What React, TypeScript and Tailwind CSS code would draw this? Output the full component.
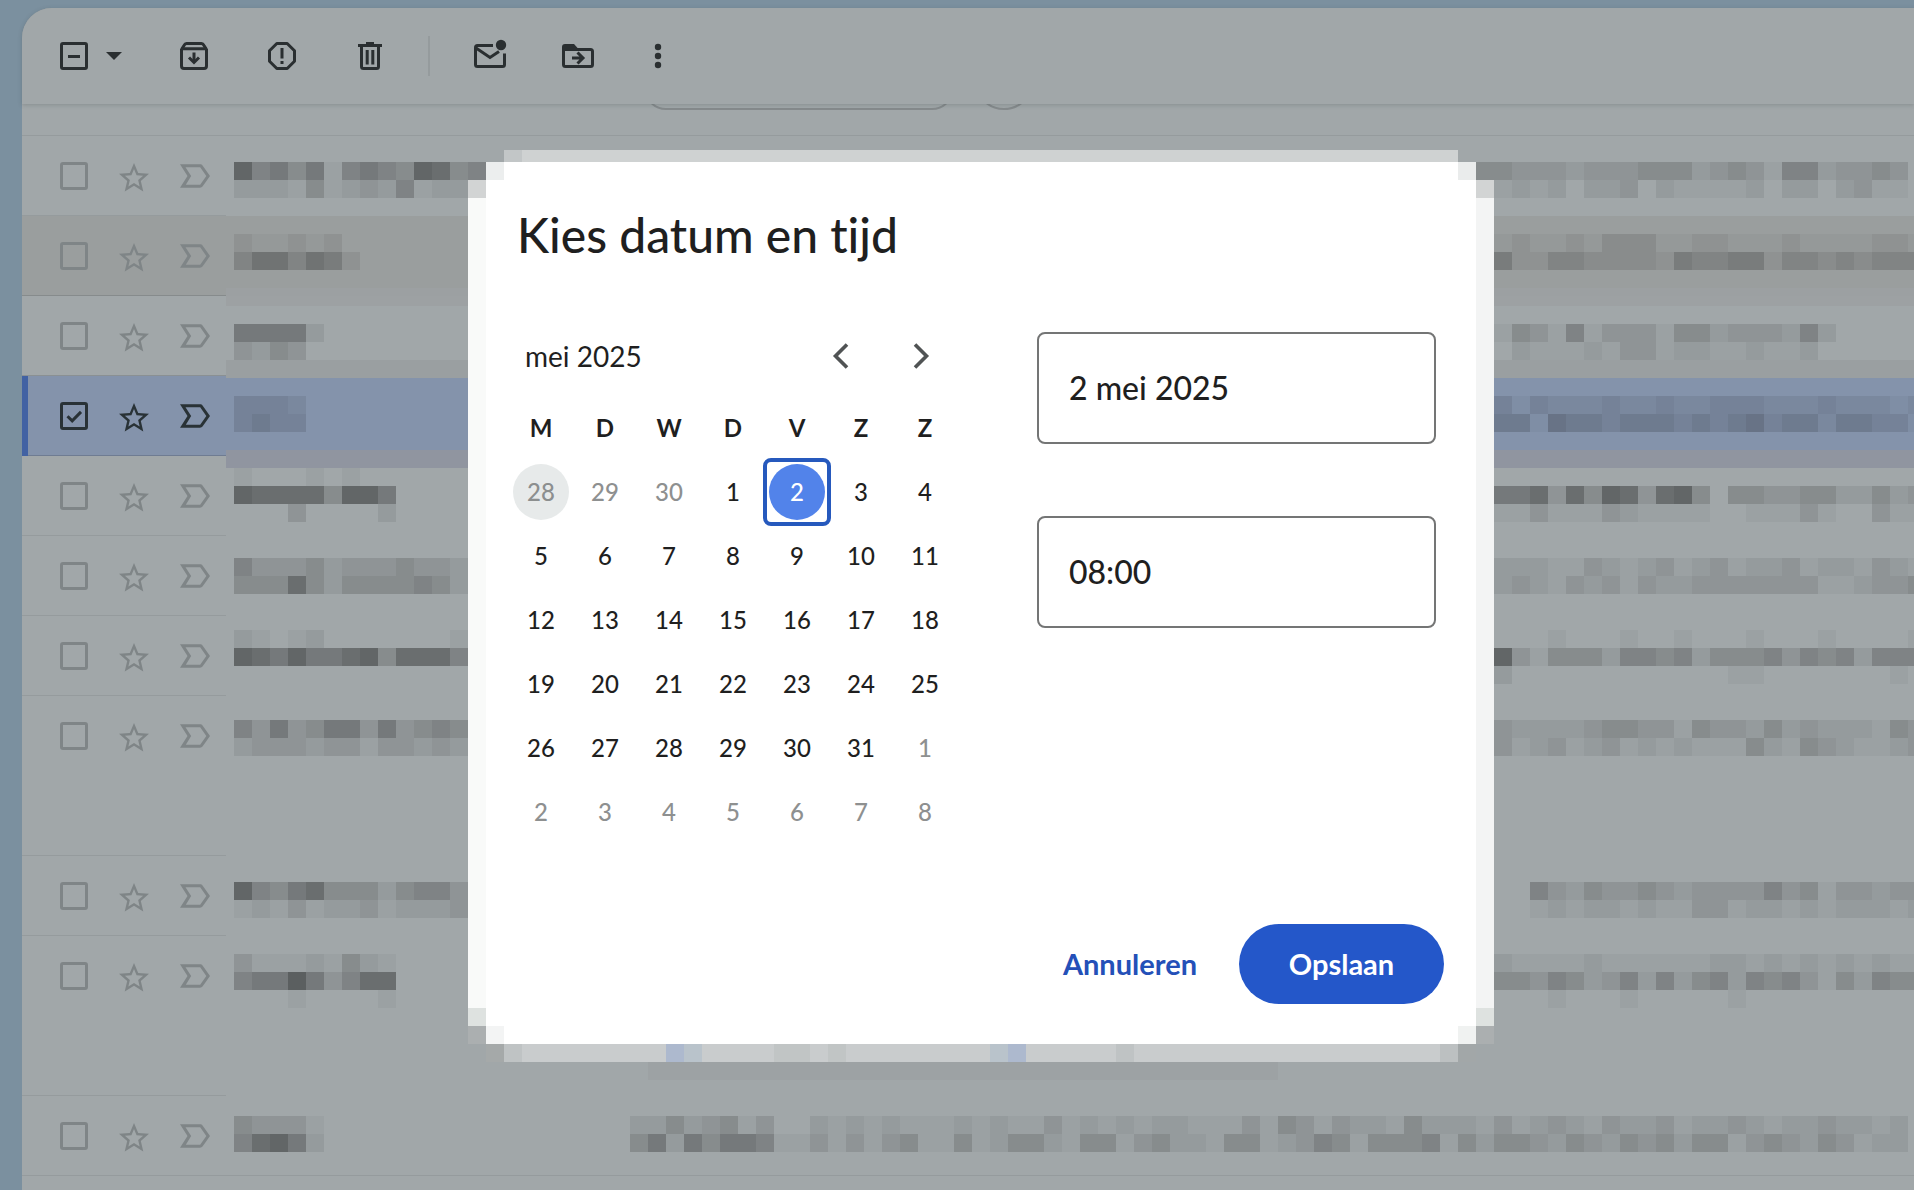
import React, { useState } from "react";

type MailRow = {
  height: string;
  offset: string;
  band: string;
  name: string[];
  preview: string[];
  middle?: string[];
  hovered?: boolean;
  selected?: boolean;
};

/* Each string is one line of 18px blocks; the digit is the block's darkness. */
const rows: MailRow[] = [
  {
    height: "h-20",
    offset: "pt-[26px]",
    band: "",
    name: ["85646156548745", "2221412325122"],
    preview: ["443332333444234315523343", "012120223021111202202311"],
  },
  {
    height: "h-20",
    offset: "pt-[18px]",
    band: "bg-[linear-gradient(#9a9e9e_72px,#9ca0a2_72px)]",
    name: ["211212", "4664652"],
    preview: ["0121121333112211121111221", "0522443333254455244343444"],
    hovered: true,
  },
  {
    height: "h-20",
    offset: "pt-[28px]",
    band: "bg-[linear-gradient(#9da1a3_10px,#a1a7a9_10px,#a1a7a9_64px,#9a9fa1_64px)]",
    name: ["66662", "3243"],
    preview: ["01431513331442333252", "0021112133122112112"],
  },
  {
    height: "h-20",
    offset: "pt-[20px]",
    band: "bg-[linear-gradient(#9a9fa1_2px,#8493ab_2px,#8493ab_74px,#9095a0_74px)]",
    name: ["3332", "3433"],
    preview: ["0313222322322333222322212", "0441544344434345344244331"],
    selected: true,
  },
  {
    height: "h-20",
    offset: "pt-[12px]",
    band: "bg-[linear-gradient(#9095a0_12px,#a1a7a9_12px)]",
    name: ["100010100", "877774886", "000300002"],
    preview: ["0000000000000000000000000", "0667374873784044334422423", "0113111321111001113100311"],
  },
  {
    height: "h-20",
    offset: "pt-[22px]",
    band: "",
    name: ["5333423334332", "4447424444542"],
    preview: ["0222113212312312231221321", "0232132313223333333112334"],
  },
  {
    height: "h-20",
    offset: "pt-[14px]",
    band: "",
    name: ["2101200000001", "8768667847775"],
    preview: ["0000100010010001000100001", "0831444255452444535452555", "0200000000000011000000010"],
  },
  {
    height: "h-40",
    offset: "pt-6",
    band: "",
    name: ["5363466363454", "2333233133232"],
    preview: ["0322223443314332423222143", "0312312312121114214321123"],
  },
  {
    height: "h-20",
    offset: "pt-[26px]",
    band: "",
    name: ["8546744424553", "1213122312223"],
    preview: ["0005324334323333534133233", "0001212212113312212122212"],
  },
  {
    height: "h-40",
    offset: "pt-[18px]",
    band: "",
    name: ["311121421", "566963577", "000100001"],
    preview: ["0211112111111221212121211", "0443542352524525453142544", "0000100010000010000000000"],
  },
  {
    height: "h-20",
    offset: "pt-5",
    band: "",
    name: ["43331", "57862"],
    preview: [],
    middle: [
      "22423413002121211121211312121221113143132214222131232132231223212232212",
      "46264665113131341141244214413422144123541444514244324324342441343243122",
    ],
  },
];

const opacities = [0, 0.03, 0.07, 0.11, 0.16, 0.21, 0.27, 0.34, 0.39, 0.43];

function Blocks({ lines }: { lines: string[] }) {
  const columns = Math.max(1, ...lines.map((line) => line.length));
  return (
    <svg
      width={columns * 18}
      height={lines.length * 18}
      className="block flex-none"
      shapeRendering="crispEdges"
      aria-hidden="true"
    >
      {lines.flatMap((line, y) =>
        line.split("").map((level, x) =>
          level === "0" ? null : (
            <rect
              key={`${x}-${y}`}
              x={x * 18}
              y={y * 18}
              width={18}
              height={18}
              fill="#000"
              fillOpacity={opacities[Number(level)]}
            />
          ),
        ),
      )}
    </svg>
  );
}

function Row({ row, index }: { row: MailRow; index: number }) {
  const [checked, setChecked] = useState(Boolean(row.selected));
  const tone = row.selected ? "text-[#293236]" : "text-[#7f8587]";
  const left = row.selected
    ? "border-[#6f7c92] bg-[#8493ab]"
    : row.hovered
      ? "border-[#868b8c] bg-[#9a9e9e]"
      : index === 2
        ? "border-[#8a9093]"
        : "border-[#959b9d]";
  return (
    <li className={`flex overflow-hidden ${row.height}`}>
      <div className={`flex w-[204px] flex-none items-start border-b ${left} ${tone}`}>
        <span className={`h-20 w-1.5 flex-none ${row.selected ? "bg-[#4262a3]" : ""}`} />
        <div className="flex h-20 items-center pl-8">
          <label className="relative flex size-7">
            <input
              type="checkbox"
              aria-label={`Bericht ${index + 1} selecteren`}
              checked={checked}
              onChange={() => setChecked(!checked)}
              className="size-7 appearance-none rounded-[3px] border-[3px] border-current"
            />
            {checked && (
              <svg viewBox="0 0 28 28" className="absolute inset-0 size-7" fill="none" stroke="currentColor" strokeWidth="3">
                <path d="M7.5 14.2l4.7 4.6 8.8-8.9" />
              </svg>
            )}
          </label>
          <button type="button" aria-label="Ster toevoegen" className="ml-7">
            <svg viewBox="0 -1.3 24 24" className="size-9" fill="currentColor">
              <path d="M22 9.24l-7.19-.62L12 2 9.19 8.63 2 9.24l5.46 4.73L5.82 21 12 17.27 18.18 21l-1.63-7.03L22 9.24zM12 15.4l-3.76 2.27 1-4.28-3.32-2.88 4.38-.38L12 6.1l1.71 4.04 4.38.38-3.32 2.88 1 4.28L12 15.4z" />
            </svg>
          </button>
          <button type="button" aria-label="Markeren als belangrijk" className="ml-[23px]">
            <svg viewBox="0 0 24 24" className="size-10" fill="currentColor">
              <path d="M15 19H3l4.5-7L3 5h12c.65 0 1.26.31 1.63.84L21 12l-4.37 6.16c-.37.52-.98.84-1.63.84zm-8.5-1.8H15.1l3.7-5.2-3.7-5.2H6.3l3.4 5.2z" />
            </svg>
          </button>
        </div>
      </div>
      <div
        className={`flex min-w-0 flex-1 items-start overflow-hidden pl-2 ${row.offset} ${row.band} ${index === 10 ? "border-b border-[#959b9d]" : ""}`}
      >
        <div className="w-[396px] flex-none">
          <Blocks lines={row.name} />
        </div>
        {row.middle ? (
          <Blocks lines={row.middle} />
        ) : (
          <div className="pl-[846px]">
            <Blocks lines={row.preview} />
          </div>
        )}
      </div>
    </li>
  );
}

function ToolButton({ label, className = "", children }: { label: string; className?: string; children: React.ReactNode }) {
  return (
    <button type="button" aria-label={label} className={`flex-none ${className}`}>
      <svg viewBox="0 0 40 40" className="size-10" fill="none" stroke="currentColor" strokeWidth="3">
        {children}
      </svg>
    </button>
  );
}

function Toolbar() {
  return (
    <div className="relative z-10 flex h-24 items-center rounded-tl-[30px] bg-[#a1a7a9] pl-8 text-[#2a2f31] shadow-[0_1px_4px_rgba(60,66,68,0.25)]">
      <label className="relative flex size-10 items-center justify-center">
        <input
          type="checkbox"
          aria-label="Alles selecteren"
          className="size-7 appearance-none rounded-[3px] border-[3px] border-current"
        />
        <span className="absolute h-[3px] w-3 bg-current" />
      </label>
      <ToolButton label="Selectieopties">
        <path d="M12 16h16l-8 8z" fill="currentColor" stroke="none" />
      </ToolButton>
      <ToolButton label="Archiveren" className="ml-10">
        <path d="M7.5 13v17a2.5 2.5 0 0 0 2.5 2.5h20a2.5 2.5 0 0 0 2.5-2.5V13M7.5 13.5l2.5-4Q11 7.5 12.5 7.5h15q1.5 0 2.5 2l2.5 4" strokeLinejoin="round" />
        <path d="M7.5 12.8h25M20 16.5v9.5" />
        <path d="M15 21.5l5 5 5-5" />
      </ToolButton>
      <ToolButton label="Spam melden" className="ml-12">
        <path d="M14.8 7.5h10.4l7.3 7.3v10.4l-7.3 7.3H14.8l-7.3-7.3V14.8z" strokeLinejoin="round" />
        <path d="M20 12v10.5M20 25v3" />
      </ToolButton>
      <ToolButton label="Verwijderen" className="ml-12">
        <path d="M8 9.5h24M11.5 10v20.5q0 2 2 2h13q2 0 2-2V10M17.2 14v14.5M22.8 14v14.5" />
        <path d="M16 8.5V6h8v2.5z" fill="currentColor" stroke="none" />
      </ToolButton>
      <span className="ml-[38px] h-10 w-0.5 bg-[#959b9d]" />
      <ToolButton label="Markeren als ongelezen" className="ml-10">
        <path d="M23 9.5H7.5q-2 0-2 2v17q0 2 2 2h25q2 0 2-2V17.5" />
        <path d="M6 12l14 9.5 9-6" />
        <circle cx="31" cy="9" r="5.2" fill="currentColor" stroke="none" />
      </ToolButton>
      <ToolButton label="Verplaatsen naar" className="ml-12">
        <path d="M5.5 28.5V13.5h27q2 0 2 2v13q0 2-2 2h-25q-2 0-2-2z" />
        <path d="M4 15V11q0-3 3-3h9l4 4.5V15z" fill="currentColor" stroke="none" />
        <path d="M14 22h10M19.5 16.5l5.5 5.5-5.5 5.5" />
      </ToolButton>
      <ToolButton label="Meer" className="ml-10">
        <g fill="currentColor" stroke="none">
          <circle cx="20" cy="11" r="3.2" />
          <circle cx="20" cy="20" r="3.2" />
          <circle cx="20" cy="29" r="3.2" />
        </g>
      </ToolButton>
    </div>
  );
}

const weekdays = ["M", "D", "W", "D", "V", "Z", "Z"];
const weeks = [
  [28, 29, 30, 1, 2, 3, 4],
  [5, 6, 7, 8, 9, 10, 11],
  [12, 13, 14, 15, 16, 17, 18],
  [19, 20, 21, 22, 23, 24, 25],
  [26, 27, 28, 29, 30, 31, 1],
  [2, 3, 4, 5, 6, 7, 8],
];

function dayStyle(week: number, day: number) {
  if (week === 0 && day === 28) return "bg-[#e7eaea] text-[#8c8f8f]";
  if (week === 0 && day === 2) return "bg-[#5283ea] text-white";
  if ((week === 0 && day > 20) || (week > 3 && day < 20)) return "text-[#8e9090]";
  return "text-[#1f1f1f]";
}

function Calendar() {
  return (
    <div className="w-[448px]">
      <div className="flex h-14 items-center pl-4">
        <h2 className="flex-1 text-[28px] text-[#1f1f1f]">mei 2025</h2>
        <button type="button" aria-label="Vorige maand" className="flex size-10 items-center justify-center">
          <svg viewBox="0 0 40 40" className="size-10" fill="none" stroke="#505354" strokeWidth="3.6">
            <path d="M26 8.5L14.5 20 26 31.5" />
          </svg>
        </button>
        <button type="button" aria-label="Volgende maand" className="mr-4 ml-10 flex size-10 items-center justify-center">
          <svg viewBox="0 0 40 40" className="size-10" fill="none" stroke="#505354" strokeWidth="3.6">
            <path d="M14 8.5L25.5 20 14 31.5" />
          </svg>
        </button>
      </div>
      <table className="mt-3 w-full table-fixed text-center text-2xl font-medium">
        <thead>
          <tr>
            {weekdays.map((name, i) => (
              <th key={i} className="h-16 p-0 font-bold text-[#1f1f1f]">
                {name}
              </th>
            ))}
          </tr>
        </thead>
        <tbody>
          {weeks.map((week, w) => (
            <tr key={w}>
              {week.map((day) => (
                <td key={day} className="h-16 p-0">
                  <div className="relative flex justify-center">
                    {w === 0 && day === 2 && (
                      <span className="absolute -top-1.5 -left-0.5 size-[68px] rounded-lg border-4 border-[#2659bd]" />
                    )}
                    <button type="button" className={`relative size-14 rounded-full ${dayStyle(w, day)}`}>
                      {day}
                    </button>
                  </div>
                </td>
              ))}
            </tr>
          ))}
        </tbody>
      </table>
    </div>
  );
}

function Field({ label, value }: { label: string; value: string }) {
  return (
    <input
      type="text"
      aria-label={label}
      defaultValue={value}
      className="h-28 w-full rounded-lg border-2 border-[#747575] bg-white px-[30px] pb-0.5 text-[32px] font-medium text-[#1f1f1f]"
    />
  );
}

function FrameSide({ fill }: { fill: string }) {
  return (
    <div className="flex w-[18px] flex-none flex-col pt-[18px]">
      <span className="h-[18px] bg-[#d2d4d4]" />
      <span className={`flex-1 ${fill}`} />
      <span className="h-[18px] bg-[#dee2e0]" />
      <span className="h-[18px] bg-[#abafb0]" />
    </div>
  );
}

function DateDialog() {
  return (
    <section role="dialog" aria-label="Kies datum en tijd" className="absolute top-[150px] left-[468px] z-20 w-[1026px]">
      <div className="mx-9 flex h-3 bg-[#cfd2d2]">
        <span className="w-[18px] bg-[#c2c6c7]" />
      </div>
      <div className="flex">
        <FrameSide fill="bg-[#f9faf9]" />
        <div className="relative flex h-[882px] flex-1 flex-col bg-white px-[23px]">
          <span className="absolute top-0 left-0 size-[18px] bg-[#eceeee]" />
          <span className="absolute top-0 right-0 size-[18px] bg-[#eaecec]" />
          <span className="absolute bottom-0 left-0 size-[18px] bg-[#f3f4f4]" />
          <span className="absolute right-0 bottom-0 size-[18px] bg-[#f0f2f1]" />
          <h1 className="mt-[35px] pl-2 text-[48px] leading-[76px] font-medium text-[#1f1f1f]">Kies datum en tijd</h1>
          <div className="mt-[55px] flex justify-between pr-[17px]">
            <Calendar />
            <div className="flex w-[399px] flex-col gap-[72px] pt-1">
              <Field label="Datum" value="2 mei 2025" />
              <Field label="Tijd" value="08:00" />
            </div>
          </div>
          <div className="mt-auto mb-10 flex justify-end pr-[9px]">
            <button type="button" className="mr-4 h-20 px-[26px] text-[29px] font-bold text-[#2450b8]">
              Annuleren
            </button>
            <button type="button" className="h-20 w-[205px] rounded-full bg-[#2457c9] text-[29px] font-bold text-white">
              Opslaan
            </button>
          </div>
        </div>
        <FrameSide fill="bg-[#f3f4f4]" />
      </div>
      <div className="mx-[18px] flex h-[18px] bg-[#c9cccd]">
        <span className="w-[18px] bg-[#a5a9a9]" />
        <span className="w-[18px] bg-[#bfc3c4]" />
        <span className="ml-36 w-[18px] bg-[#adb9ce]" />
        <span className="w-[18px] bg-[#b9c3cb]" />
        <span className="ml-[72px] w-9 bg-[#c1c5c5]" />
        <span className="ml-[18px] w-[18px] bg-[#c1c5c5]" />
        <span className="ml-36 w-[18px] bg-[#b9c3cb]" />
        <span className="w-[18px] bg-[#adb9ce]" />
        <span className="ml-[90px] w-[18px] bg-[#bfc3c4]" />
        <span className="ml-auto w-[18px] bg-[#bcc0c1]" />
        <span className="w-[18px] bg-[#a2a7a8]" />
      </div>
      <div className="mr-[216px] ml-[180px] h-[18px] bg-[#9da2a4]" />
    </section>
  );
}

export default function App() {
  return (
    <main className="relative h-screen overflow-hidden bg-[#7b909f] pt-2 pl-[22px] font-[Lato,sans-serif] [font-variant-ligatures:none]">
      <div className="min-h-full rounded-tl-[30px] bg-[#a1a7a9]">
        <Toolbar />
        <div className="relative h-8 overflow-hidden border-b border-[#959b9d]">
          <span className="absolute bottom-[25px] left-[622px] h-16 w-[310px] rounded-[22px] border-2 border-[#858a8c]" />
          <span className="absolute bottom-[25px] left-[952px] size-[60px] rounded-full border-2 border-[#858a8c]" />
        </div>
        <ul>
          {rows.map((row, index) => (
            <Row key={index} row={row} index={index} />
          ))}
        </ul>
      </div>
      <DateDialog />
    </main>
  );
}
